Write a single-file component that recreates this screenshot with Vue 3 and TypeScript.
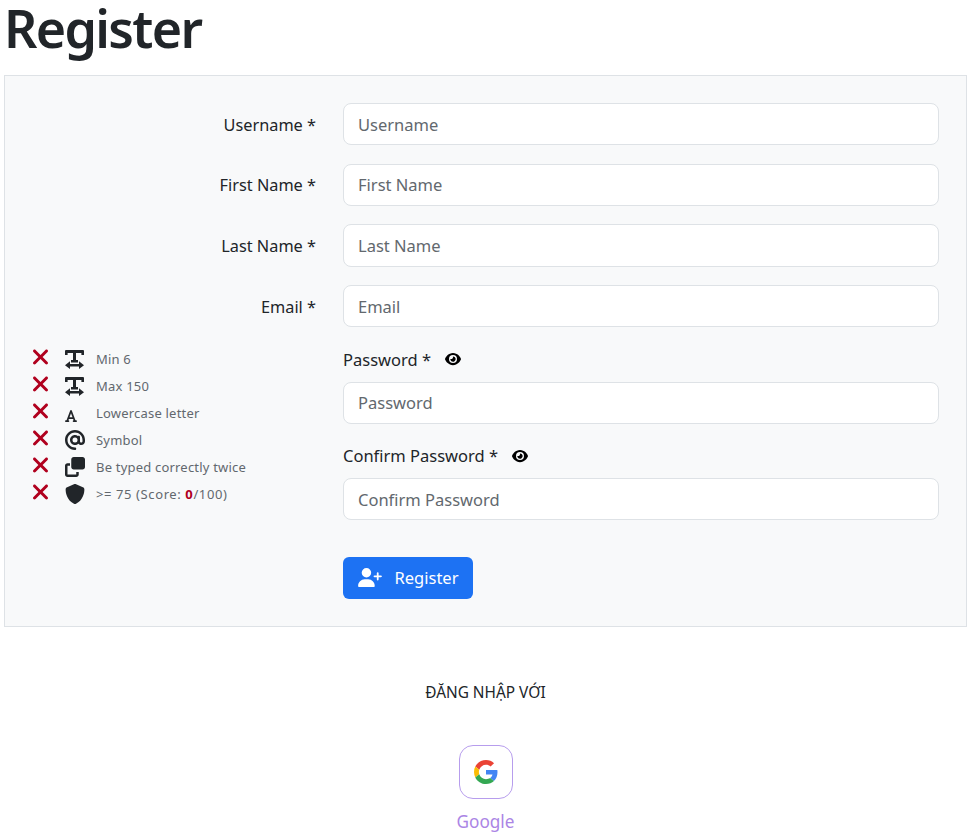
<template>
  <div class="page">
    <h1 class="title">Register</h1>

    <form class="panel" @submit.prevent>
      <div v-for="field in topFields" :key="field" class="row">
        <label class="side-label">{{ field }} *</label>
        <input class="control" type="text" :placeholder="field" />
      </div>

      <div class="row password-row">
        <ul class="rules">
          <li v-for="rule in rules" :key="rule.text" class="rule" :class="{ 'score-rule': rule.score }">
            <svg class="cross" viewBox="0 0 320 512"><path :d="crossPath" /></svg>
            <span class="rule-icon">
              <svg :style="{ width: rule.w + 'px', height: rule.h + 'px' }" :viewBox="rule.box"><path :d="rule.path" /></svg>
            </span>
            <span class="rule-text">{{ rule.text }}<template v-if="rule.score"><b>0</b>/100)</template></span>
          </li>
        </ul>

        <div class="password-col">
          <div v-for="field in passwordFields" :key="field" class="password-field">
            <div class="top-label">
              <label>{{ field }} *</label>
              <svg class="eye" viewBox="0 0 576 512"><path :d="eyePath" /></svg>
            </div>
            <input class="control" type="password" :placeholder="field" />
          </div>
          <button class="submit" type="submit">
            <svg viewBox="0 0 640 512"><path :d="userPlusPath" /></svg>
            <span>Register</span>
          </button>
        </div>
      </div>
    </form>

    <div class="social">
      <p class="social-title">ĐĂNG NHẬP VỚI</p>
      <a class="google-box" href="#">
        <svg viewBox="0 0 48 48">
          <path fill="#EA4335" d="M24 9.5c3.54 0 6.71 1.22 9.21 3.6l6.85-6.85C35.9 2.38 30.47 0 24 0 14.62 0 6.51 5.38 2.56 13.22l7.98 6.19C12.43 13.72 17.74 9.5 24 9.5z" />
          <path fill="#4285F4" d="M46.98 24.55c0-1.57-.15-3.09-.38-4.55H24v9.02h12.94c-.58 2.96-2.26 5.48-4.78 7.18l7.73 6c4.51-4.18 7.09-10.36 7.09-17.65z" />
          <path fill="#FBBC05" d="M10.53 28.59c-.48-1.45-.76-2.99-.76-4.59s.27-3.14.76-4.59l-7.98-6.19C.92 16.46 0 20.12 0 24c0 3.88.92 7.54 2.56 10.78l7.97-6.19z" />
          <path fill="#34A853" d="M24 48c6.48 0 11.93-2.13 15.89-5.81l-7.73-6c-2.15 1.45-4.92 2.3-8.16 2.3-6.26 0-11.57-4.22-13.47-9.91l-7.98 6.19C6.51 42.62 14.62 48 24 48z" />
        </svg>
      </a>
      <div class="google-name">Google</div>
    </div>
  </div>
</template>

<script setup lang="ts">
interface Rule {
  text: string;
  path: string;
  box: string;
  w: number;
  h: number;
  score?: boolean;
}

const topFields = ['Username', 'First Name', 'Last Name', 'Email'];
const passwordFields = ['Password', 'Confirm Password'];

const crossPath = 'M310.6 150.6c12.5-12.5 12.5-32.8 0-45.3s-32.8-12.5-45.3 0L160 210.7 54.6 105.4c-12.5-12.5-32.8-12.5-45.3 0s-12.5 32.8 0 45.3L114.7 256 9.4 361.4c-12.5 12.5-12.5 32.8 0 45.3s32.8 12.5 45.3 0L160 301.3 265.4 406.6c12.5 12.5 32.8 12.5 45.3 0s12.5-32.8 0-45.3L205.3 256 310.6 150.6z';
const eyePath = 'M288 32c-80.8 0-145.5 36.8-192.6 80.6C48.6 156 17.3 208 2.5 243.7c-3.3 7.9-3.3 16.7 0 24.6C17.3 304 48.6 356 95.4 399.4C142.5 443.2 207.2 480 288 480s145.5-36.8 192.6-80.6c46.8-43.5 78.1-95.4 93-131.1c3.3-7.9 3.3-16.7 0-24.6c-14.9-35.7-46.2-87.7-93-131.1C433.5 68.8 368.8 32 288 32zM144 256a144 144 0 1 1 288 0 144 144 0 1 1 -288 0zm144-64c0 35.3-28.7 64-64 64c-7.1 0-13.9-1.2-20.3-3.3c-5.5-1.8-11.9 1.6-11.7 7.4c.3 6.9 1.3 13.8 3.2 20.7c13.7 51.2 66.4 81.6 117.6 67.9s81.6-66.4 67.9-117.6c-11.1-41.5-47.8-69.4-88.6-71.1c-5.8-.2-9.2 6.1-7.4 11.7c2.1 6.4 3.3 13.2 3.3 20.3z';
const userPlusPath = 'M96 128a128 128 0 1 1 256 0A128 128 0 1 1 96 128zM0 482.3C0 383.8 79.8 304 178.3 304h91.4C368.2 304 448 383.8 448 482.3c0 16.4-13.3 29.7-29.7 29.7H29.7C13.3 512 0 498.7 0 482.3zM504 312V248H440c-13.3 0-24-10.7-24-24s10.7-24 24-24h64V136c0-13.3 10.7-24 24-24s24 10.7 24 24v64h64c13.3 0 24 10.7 24 24s-10.7 24-24 24H552v64c0 13.3-10.7 24-24 24s-24-10.7-24-24z';

// T on top with a two-way arrow under it
const textWidthPath = 'M1 0h17a1 1 0 0 1 1 1v4h-2.6V3H11v7h2v2.4H6V10h2V3H2.6v2H0V1a1 1 0 0 1 1-1zM0 15.2L5 11.3V14H14V11.3L19 15.2L14 19V16.4H5V19z';

const rules: Rule[] = [
  { text: 'Min 6', path: textWidthPath, box: '0 0 19 19', w: 19, h: 19 },
  { text: 'Max 150', path: textWidthPath, box: '0 0 19 19', w: 19, h: 19 },
  {
    text: 'Lowercase letter',
    path: 'M254 52.8C249.3 40.3 237.3 32 224 32s-25.3 8.3-30 20.8L57.8 416H32c-17.7 0-32 14.3-32 32s14.3 32 32 32h96c17.7 0 32-14.3 32-32s-14.3-32-32-32h-1.8l18-48H303.8l18 48H320c-17.7 0-32 14.3-32 32s14.3 32 32 32h96c17.7 0 32-14.3 32-32s-14.3-32-32-32H390.2L254 52.8zM279.8 304H168.2L224 155.1 279.8 304z',
    box: '0 0 448 512',
    w: 12,
    h: 14
  },
  {
    text: 'Symbol',
    path: 'M256 64C150 64 64 150 64 256s86 192 192 192c17.7 0 32 14.3 32 32s-14.3 32-32 32C114.6 512 0 397.4 0 256S114.6 0 256 0S512 114.6 512 256v32c0 53-43 96-96 96c-29.3 0-55.6-13.2-73.2-33.9C320 371.1 289.5 384 256 384c-70.7 0-128-57.3-128-128s57.3-128 128-128c27.9 0 53.7 8.9 74.7 24.1c5.7-5 13.1-8.1 21.3-8.1c17.7 0 32 14.3 32 32v80 32c0 17.7 14.3 32 32 32s32-14.3 32-32V256c0-106-86-192-192-192zm64 192a64 64 0 1 0 -128 0 64 64 0 1 0 128 0z',
    box: '0 0 512 512',
    w: 20,
    h: 20
  },
  {
    text: 'Be typed correctly twice',
    path: 'M0 448c0 35.3 28.7 64 64 64H288c35.3 0 64-28.7 64-64V384H288v64H64V224h64V160H64c-35.3 0-64 28.7-64 64V448zm224-128H448c35.3 0 64-28.7 64-64V64c0-35.3-28.7-64-64-64H224c-35.3 0-64 28.7-64 64V256c0 35.3 28.7 64 64 64z',
    box: '0 0 512 512',
    w: 20,
    h: 20
  },
  {
    text: '>= 75 (Score: ',
    path: 'M256 0c4.6 0 9.2 1 13.4 2.9L457.7 82.8c22 9.3 38.4 31 38.3 57.2c-.5 99.2-41.3 280.7-213.6 363.2c-16.7 8-36.1 8-52.8 0C57.3 420.7 16.5 239.2 16 140c-.1-26.2 16.3-47.9 38.3-57.2L242.7 2.9C246.8 1 251.4 0 256 0z',
    box: '0 0 512 512',
    w: 20,
    h: 20,
    score: true
  }
];
</script>

<style>
html,
body {
  margin: 0;
  background: #fff;
}
</style>

<style scoped>
.page {
  padding: 0 4px;
  height: 837px;
  box-sizing: border-box;
  overflow: hidden;
  font-family: "Noto Sans", "Open Sans", sans-serif;
  color: #212529;
}

.title {
  margin: 0;
  height: 75px;
  font-size: 52px;
  line-height: 56px;
  font-weight: 600;
  letter-spacing: -1.7px;
}

.panel {
  border: 1px solid #dee2e6;
  background: #f8f9fa;
  padding: 27px;
}

.row {
  display: grid;
  grid-template-columns: 284px 596px;
  column-gap: 27px;
  align-items: center;
  margin-bottom: 18.25px;
}

.side-label {
  padding-top: 1px;
  text-align: right;
  font-size: 16.3px;
}

.control {
  display: block;
  box-sizing: border-box;
  width: 100%;
  height: 42.4px;
  padding: 0 14px;
  border: 1px solid #dee2e6;
  border-radius: 8px;
  background: #fff;
  font: inherit;
  font-size: 16.5px;
  color: #212529;
}

.control::placeholder {
  color: #62686e;
  opacity: 1;
}

.password-row {
  align-items: start;
  margin: 0;
}

.rules {
  list-style: none;
  margin: 0;
  padding: 0;
}

.rule {
  display: flex;
  align-items: center;
  height: 27px;
  font-size: 13px;
  letter-spacing: 0.2px;
  color: #62686e;
}

.score-rule {
  letter-spacing: 0.6px;
}

.cross {
  width: 15px;
  height: 24px;
  margin: 0 0 4px 1px;
  fill: #b0001e;
  flex: none;
}

.rule-icon {
  display: flex;
  justify-content: flex-start;
  align-items: flex-end;
  height: 20px;
  width: 20px;
  margin-left: 17px;
  flex: none;
}

.rule-icon svg {
  fill: #212529;
  display: block;
}

.rule-text {
  margin-left: 11px;
}

.rule-text b {
  color: #b0001e;
}

.password-field {
  margin-bottom: 18px;
}

.top-label {
  display: flex;
  align-items: center;
  gap: 13.5px;
  height: 28px;
  margin-bottom: 8px;
  font-size: 16.5px;
}

.eye {
  width: 16px;
  height: 14.2px;
  fill: #000;
}

.submit {
  display: flex;
  align-items: center;
  gap: 13px;
  height: 42px;
  margin-top: 36.5px;
  padding: 0 14.5px;
  border: 0;
  border-radius: 6px;
  background: #1d72f3;
  color: #fff;
  font: inherit;
  font-size: 16.5px;
}

.submit svg {
  width: 24px;
  height: 19px;
  fill: #fff;
}

.social {
  display: flex;
  flex-direction: column;
  align-items: center;
  padding-top: 55px;
}

.social-title {
  margin: 0 0 41px;
  font-size: 15.4px;
  line-height: 22px;
}

.google-box {
  display: flex;
  align-items: center;
  justify-content: center;
  box-sizing: border-box;
  width: 54px;
  height: 54px;
  border: 1px solid #b79ded;
  border-radius: 14px;
  background: #fff;
}

.google-box svg {
  width: 24px;
  height: 24px;
}

.google-name {
  margin-top: 9px;
  font-size: 17.2px;
  line-height: 28px;
  color: #ab85e5;
}
</style>
